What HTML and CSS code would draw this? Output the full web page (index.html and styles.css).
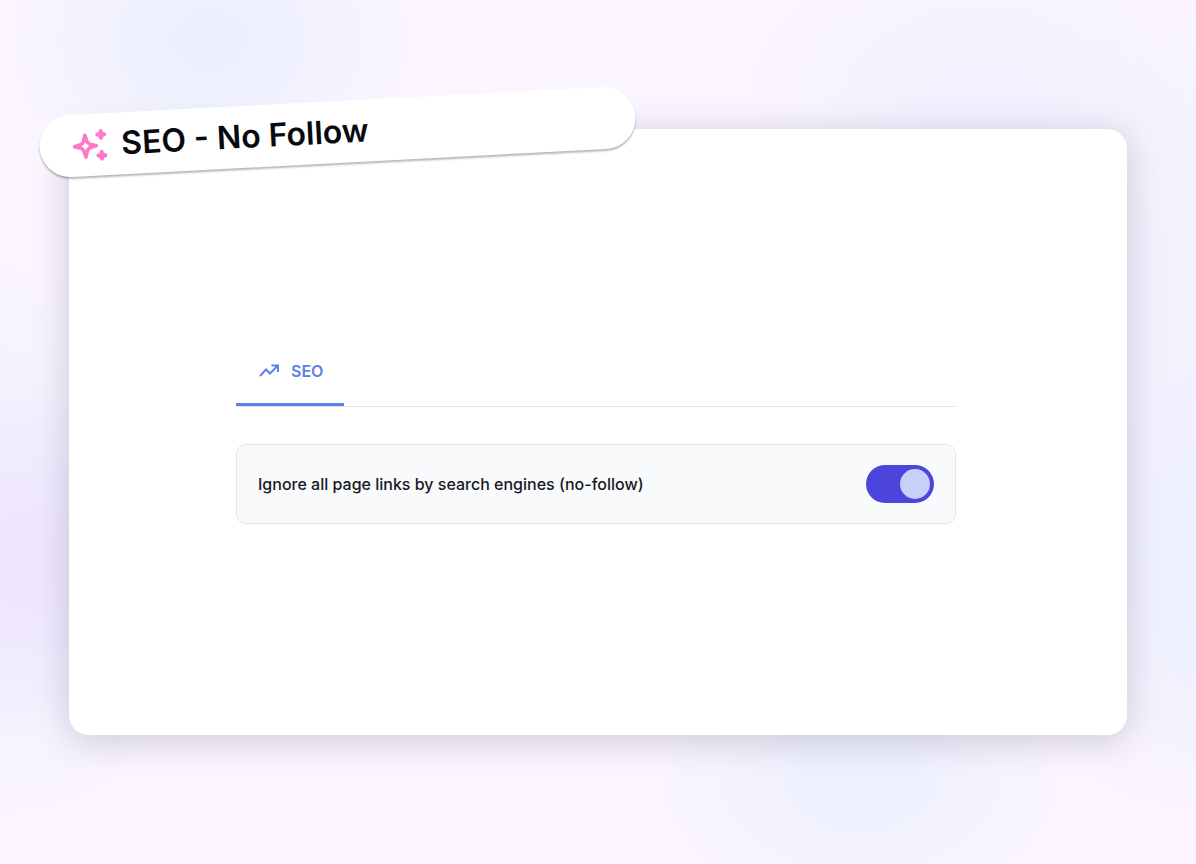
FILE: index.html
```html
<!DOCTYPE html>
<html lang="en">
<head>
<meta charset="utf-8">
<meta name="viewport" content="width=device-width, initial-scale=1">
<title>SEO - No Follow</title>
<link rel="stylesheet" href="styles.css">
</head>
<body class="stage">
<main class="card">
  <header class="ribbon">
    <svg class="ribbon-icon" viewBox="0 0 36 36" aria-hidden="true">
      <path d="M14 8L16 15L18 17L25 19L18 21L16 23L14 30L12 23L10 21L3 19L10 17L12 15Z" fill="none" stroke="currentColor" stroke-width="3.600" stroke-linejoin="round"/>
      <path d="M30 4.500Q30.200 7.800 33.500 8Q30.200 8.200 30 11.500Q29.800 8.200 26.500 8Q29.800 7.800 30 4.500Z" fill="currentColor" stroke="currentColor" stroke-width="4" stroke-linejoin="round"/>
      <path d="M30 25.500Q30.200 28.800 33.500 29Q30.200 29.200 30 32.500Q29.800 29.200 26.500 29Q29.800 28.800 30 25.500Z" fill="currentColor" stroke="currentColor" stroke-width="4" stroke-linejoin="round"/>
    </svg>
    <h1 class="ribbon-title">SEO - No Follow</h1>
  </header>
  <section class="panel">
    <div class="tabs" role="tablist">
      <button class="tab" type="button" role="tab" aria-selected="true">
        <svg class="tab-icon" viewBox="0 0 20 20" aria-hidden="true">
          <path d="M1 15L7 8.500L11 12.500L18.500 5M12.500 4.500H19V11" fill="none" stroke="currentColor" stroke-width="2"/>
        </svg>
        SEO
      </button>
    </div>
    <div class="setting">
      <label class="setting-label" for="no-follow">Ignore all page links by search engines (no-follow)</label>
      <input class="toggle" id="no-follow" type="checkbox" role="switch" checked>
    </div>
  </section>
</main>
</body>
</html>
```
FILE: styles.css
```css
* {
  box-sizing: border-box;
}

.stage {
  margin: 0;
  min-height: 100vh;
  padding: 129px 69px;
  display: flex;
  font-family: Inter, "Liberation Sans", sans-serif;
  background:
    radial-gradient(ellipse 200px 170px at 210px 40px, #ebefff 10%, #ebefff00 100%),
    radial-gradient(ellipse 240px 180px at 980px 110px, #f3f0ff 20%, #f3f0ff00 100%),
    radial-gradient(ellipse 120px 180px at 20px 560px, #eee6ff 20%, #eee6ff00 100%),
    radial-gradient(ellipse 100px 220px at 1200px 570px, #ecf0ff 10%, #ecf0ff00 100%),
    radial-gradient(ellipse 200px 130px at 860px 780px, #edf0ff 10%, #edf0ff00 100%),
    radial-gradient(ellipse 240px 280px at 0 540px, #f3f1ff 40%, #f3f1ff00 100%),
    radial-gradient(ellipse 300px 420px at 1200px 400px, #f4f1ff 40%, #f4f1ff00 100%),
    #faf5ff;
}

.card {
  position: relative;
  flex: 1;
  display: flex;
  align-items: center;
  padding: 0 171px 5px 167px;
  border-radius: 20px;
  background: #fff;
  box-shadow: 0 6px 36px rgba(30, 30, 50, 0.2);
}

.ribbon {
  position: absolute;
  top: -28px;
  left: -30px;
  width: 597px;
  max-width: 100%;
  padding: 11px 32px;
  display: flex;
  align-items: center;
  gap: 14px;
  border-radius: 32px;
  background: #fff;
  box-shadow: 0 2px 2px rgba(0, 0, 0, 0.28);
  transform: rotate(-3deg);
}

.ribbon-icon {
  width: 36px;
  height: 36px;
  flex: none;
  color: #ff7ac6;
}

.ribbon-title {
  margin: 0;
  font-size: 32px;
  line-height: 40px;
  font-weight: 600;
  color: #080a10;
}

.panel {
  flex: 1;
}

.tabs {
  display: flex;
  border-bottom: 1px solid #e2e1ee;
}

.tab {
  display: flex;
  align-items: center;
  gap: 12px;
  height: 71px;
  padding: 4px 21px 0 23px;
  border: 0;
  border-bottom: 3px solid #5c80ec;
  background: none;
  color: #5c80ec;
  font-family: inherit;
  font-size: 16px;
  line-height: 24px;
  font-weight: 600;
}

.tab-icon {
  width: 20px;
  height: 20px;
}

.setting {
  margin-top: 37px;
  padding: 20px 21px;
  display: flex;
  align-items: center;
  justify-content: space-between;
  gap: 24px;
  border: 1px solid #e4e2f0;
  border-radius: 10px;
  background: #f9fafc;
}

.setting-label {
  font-size: 16px;
  line-height: 24px;
  font-weight: 500;
  color: #181824;
}

.toggle {
  appearance: none;
  flex: none;
  display: flex;
  align-items: center;
  width: 68px;
  height: 38px;
  margin: 0;
  padding: 4px;
  border-radius: 19px;
  background: #b9bccb;
}

.toggle::before {
  content: "";
  width: 30px;
  height: 30px;
  border-radius: 50%;
  background: #c7d0fb;
}

.toggle:checked {
  justify-content: flex-end;
  background: #4d44dc;
}
```
